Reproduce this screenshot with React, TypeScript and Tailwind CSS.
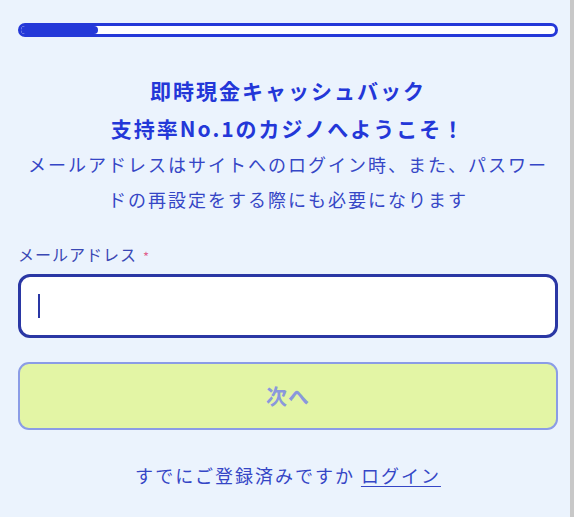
import React from 'react';

const FONT = { fontFamily: '"Noto Sans CJK JP", "Noto Sans", sans-serif' };

export default function App() {
  return (
    <div className="flex min-h-[517px] w-full bg-[#ebf3fd]" style={FONT}>
      <main className="flex-1 pl-[18px] pr-[12px] pt-[23px]">
        {/* progress */}
        <div className="h-[14px] rounded-full border-[3px] border-[#2438d8] bg-white overflow-hidden">
          <div className="h-full w-[77px] rounded-full bg-[#2438d8]" />
        </div>

        {/* heading */}
        <h1 className="mt-[34px] text-center text-[21px] font-bold leading-[38px] tracking-[2px] text-[#2337d8]">
          即時現金キャッシュバック
          <br />
          支持率No.1のカジノへようこそ！
        </h1>

        <p className="text-center text-[18px] leading-[35px] tracking-[2px] text-[#3546c6]">
          メールアドレスはサイトへのログイン時、また、パスワー
          <br />
          ドの再設定をする際にも必要になります
        </p>

        {/* email */}
        <label className="mt-[27px] flex h-[20px] items-center text-[16px] leading-[20px] tracking-[1px] text-[#3a48b4]">
          メールアドレス
          <span className="ml-[6px] mt-[6px] text-[13px] leading-[14px] text-[#e0628f]">*</span>
        </label>
        <div className="mt-[10px] flex h-[64px] items-center rounded-[12px] border-[3px] border-[#2a37a4] bg-white pl-[17px]">
          <div className="h-[24px] w-[2px] bg-[#2a37a4]" />
        </div>

        {/* next */}
        <button
          disabled
          className="mt-[24px] flex h-[68px] w-full items-center justify-center rounded-[11px] border-[2.5px] border-[#8b9ce6] bg-[#e3f5a5] text-[21px] font-bold tracking-[1px] text-[#8a98dc]"
        >
          次へ
        </button>

        <p className="mt-[33px] text-center text-[18px] leading-[24px] tracking-[2px] text-[#3546c6]">
          すでにご登録済みですか{' '}
          <a className="underline decoration-1 underline-offset-[3px]">ログイン</a>
        </p>
      </main>
      <div className="w-[4px] shrink-0 bg-[#c8c8c8]" />
    </div>
  );
}
